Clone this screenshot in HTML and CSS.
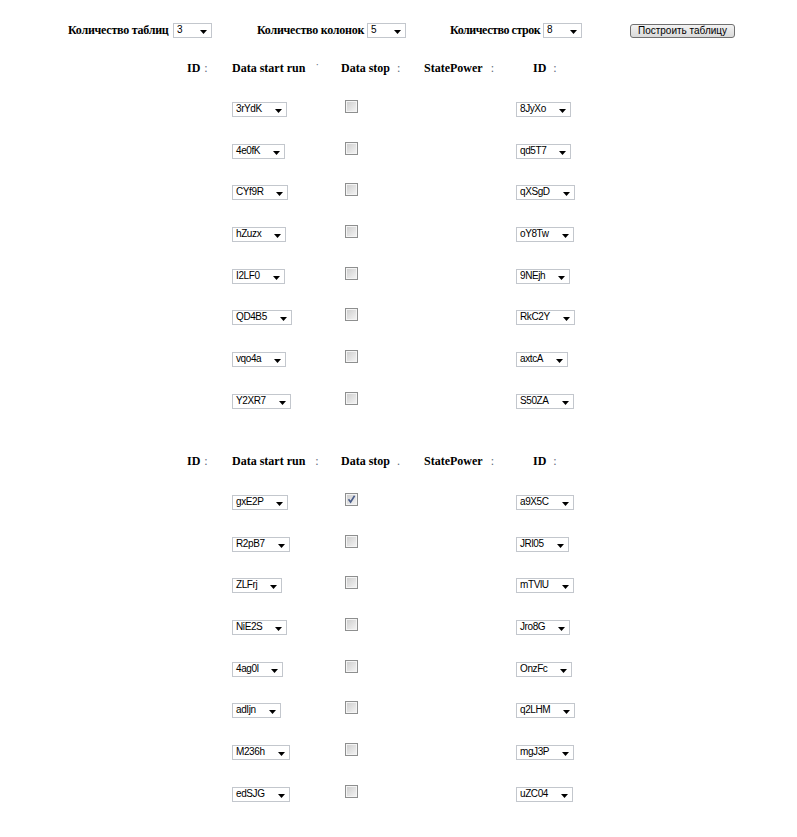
FILE: index.html
```html
<!DOCTYPE html>
<html>
<head>
<meta charset="utf-8">
<link rel="stylesheet" href="styles.css">
</head>
<body>
<div class="bar">
  <div class="grp g1"><span class="lbl">Количество таблиц</span><div class="sel small"><span>3</span><svg class="arr" width="7" height="4"><path d="M0 0h7L3.5 4z"/></svg></div></div>
  <div class="grp g2"><span class="lbl">Количество колонок</span><div class="sel small"><span>5</span><svg class="arr" width="7" height="4"><path d="M0 0h7L3.5 4z"/></svg></div></div>
  <div class="grp g3"><span class="lbl">Количество строк</span><div class="sel small"><span>8</span><svg class="arr" width="7" height="4"><path d="M0 0h7L3.5 4z"/></svg></div></div>
  <button class="btn">Построить таблицу</button>
</div>

<div class="tbl">
  <div class="th c1">ID<span class="c m1">:</span></div>
  <div class="th c2">Data start run<span class="c m2">˙</span></div>
  <div class="th c3">Data stop<span class="c m3">:</span></div>
  <div class="th c4">StatePower<span class="c m4">:</span></div>
  <div class="th c5">ID<span class="c m5">:</span></div>

  <div></div><div class="td"><div class="sel"><span>3rYdK</span><svg class="arr" width="7" height="4"><path d="M0 0h7L3.5 4z"/></svg></div></div><div class="td c3"><span class="cb"></span></div><div></div><div class="td"><div class="sel"><span>8JyXo</span><svg class="arr" width="7" height="4"><path d="M0 0h7L3.5 4z"/></svg></div></div>
  <div></div><div class="td"><div class="sel"><span>4e0fK</span><svg class="arr" width="7" height="4"><path d="M0 0h7L3.5 4z"/></svg></div></div><div class="td c3"><span class="cb"></span></div><div></div><div class="td"><div class="sel"><span>qd5T7</span><svg class="arr" width="7" height="4"><path d="M0 0h7L3.5 4z"/></svg></div></div>
  <div></div><div class="td"><div class="sel"><span>CYf9R</span><svg class="arr" width="7" height="4"><path d="M0 0h7L3.5 4z"/></svg></div></div><div class="td c3"><span class="cb"></span></div><div></div><div class="td"><div class="sel"><span>qXSgD</span><svg class="arr" width="7" height="4"><path d="M0 0h7L3.5 4z"/></svg></div></div>
  <div></div><div class="td"><div class="sel"><span>hZuzx</span><svg class="arr" width="7" height="4"><path d="M0 0h7L3.5 4z"/></svg></div></div><div class="td c3"><span class="cb"></span></div><div></div><div class="td"><div class="sel"><span>oY8Tw</span><svg class="arr" width="7" height="4"><path d="M0 0h7L3.5 4z"/></svg></div></div>
  <div></div><div class="td"><div class="sel"><span>I2LF0</span><svg class="arr" width="7" height="4"><path d="M0 0h7L3.5 4z"/></svg></div></div><div class="td c3"><span class="cb"></span></div><div></div><div class="td"><div class="sel"><span>9NEjh</span><svg class="arr" width="7" height="4"><path d="M0 0h7L3.5 4z"/></svg></div></div>
  <div></div><div class="td"><div class="sel"><span>QD4B5</span><svg class="arr" width="7" height="4"><path d="M0 0h7L3.5 4z"/></svg></div></div><div class="td c3"><span class="cb"></span></div><div></div><div class="td"><div class="sel"><span>RkC2Y</span><svg class="arr" width="7" height="4"><path d="M0 0h7L3.5 4z"/></svg></div></div>
  <div></div><div class="td"><div class="sel"><span>vqo4a</span><svg class="arr" width="7" height="4"><path d="M0 0h7L3.5 4z"/></svg></div></div><div class="td c3"><span class="cb"></span></div><div></div><div class="td"><div class="sel"><span>axtcA</span><svg class="arr" width="7" height="4"><path d="M0 0h7L3.5 4z"/></svg></div></div>
  <div></div><div class="td"><div class="sel"><span>Y2XR7</span><svg class="arr" width="7" height="4"><path d="M0 0h7L3.5 4z"/></svg></div></div><div class="td c3"><span class="cb"></span></div><div></div><div class="td"><div class="sel"><span>S50ZA</span><svg class="arr" width="7" height="4"><path d="M0 0h7L3.5 4z"/></svg></div></div>
</div>

<div class="tbl">
  <div class="th c1">ID<span class="c m1">:</span></div>
  <div class="th c2">Data start run<span class="c m2">:</span></div>
  <div class="th c3">Data stop<span class="c m3">.</span></div>
  <div class="th c4">StatePower<span class="c m4">:</span></div>
  <div class="th c5">ID<span class="c m5">:</span></div>

  <div></div><div class="td"><div class="sel"><span>gxE2P</span><svg class="arr" width="7" height="4"><path d="M0 0h7L3.5 4z"/></svg></div></div><div class="td c3"><span class="cb checked"><svg width="11" height="11" viewBox="0 0 11 11"><path d="M2.5 5.2 L4.6 8 L8.6 1.8" fill="none" stroke="#4a5d8a" stroke-width="1.6"/></svg></span></div><div></div><div class="td"><div class="sel"><span>a9X5C</span><svg class="arr" width="7" height="4"><path d="M0 0h7L3.5 4z"/></svg></div></div>
  <div></div><div class="td"><div class="sel"><span>R2pB7</span><svg class="arr" width="7" height="4"><path d="M0 0h7L3.5 4z"/></svg></div></div><div class="td c3"><span class="cb"></span></div><div></div><div class="td"><div class="sel"><span>JRl05</span><svg class="arr" width="7" height="4"><path d="M0 0h7L3.5 4z"/></svg></div></div>
  <div></div><div class="td"><div class="sel"><span>ZLFrj</span><svg class="arr" width="7" height="4"><path d="M0 0h7L3.5 4z"/></svg></div></div><div class="td c3"><span class="cb"></span></div><div></div><div class="td"><div class="sel"><span>mTVlU</span><svg class="arr" width="7" height="4"><path d="M0 0h7L3.5 4z"/></svg></div></div>
  <div></div><div class="td"><div class="sel"><span>NiE2S</span><svg class="arr" width="7" height="4"><path d="M0 0h7L3.5 4z"/></svg></div></div><div class="td c3"><span class="cb"></span></div><div></div><div class="td"><div class="sel"><span>Jro8G</span><svg class="arr" width="7" height="4"><path d="M0 0h7L3.5 4z"/></svg></div></div>
  <div></div><div class="td"><div class="sel"><span>4ag0l</span><svg class="arr" width="7" height="4"><path d="M0 0h7L3.5 4z"/></svg></div></div><div class="td c3"><span class="cb"></span></div><div></div><div class="td"><div class="sel"><span>OnzFc</span><svg class="arr" width="7" height="4"><path d="M0 0h7L3.5 4z"/></svg></div></div>
  <div></div><div class="td"><div class="sel"><span>adIjn</span><svg class="arr" width="7" height="4"><path d="M0 0h7L3.5 4z"/></svg></div></div><div class="td c3"><span class="cb"></span></div><div></div><div class="td"><div class="sel"><span>q2LHM</span><svg class="arr" width="7" height="4"><path d="M0 0h7L3.5 4z"/></svg></div></div>
  <div></div><div class="td"><div class="sel"><span>M236h</span><svg class="arr" width="7" height="4"><path d="M0 0h7L3.5 4z"/></svg></div></div><div class="td c3"><span class="cb"></span></div><div></div><div class="td"><div class="sel"><span>mgJ3P</span><svg class="arr" width="7" height="4"><path d="M0 0h7L3.5 4z"/></svg></div></div>
  <div></div><div class="td"><div class="sel"><span>edSJG</span><svg class="arr" width="7" height="4"><path d="M0 0h7L3.5 4z"/></svg></div></div><div class="td c3"><span class="cb"></span></div><div></div><div class="td"><div class="sel"><span>uZC04</span><svg class="arr" width="7" height="4"><path d="M0 0h7L3.5 4z"/></svg></div></div>
</div>
</body>
</html>
```

FILE: styles.css
```css
html, body {
  background: #ffffff;
}
body {
  margin: 8px;
  font-family: "Liberation Serif", "Times New Roman", serif;
  font-size: 12px;
  color: #000;
}

.bar {
  display: flex;
  align-items: flex-start;
  padding-top: 15px;
  padding-left: 60px;
  height: 15px;
  margin-bottom: 23.45px;
}
.grp {
  display: flex;
  align-items: flex-start;
}
.g1 { width: 189px; }
.g2 { width: 193px; }
.g3 { width: 181px; }
.lbl {
  font-weight: bold;
  line-height: 15px;
  white-space: nowrap;
  letter-spacing: -0.25px;
  flex: none;
}
.g1 .lbl { width: 105px; }
.g2 .lbl { width: 110px; }
.g3 .lbl { width: 93px; letter-spacing: -0.45px; }

.sel {
  display: inline-flex;
  align-items: flex-start;
  box-sizing: border-box;
  height: 15px;
  border: 1px solid #c3c7cd;
  background: #fff;
  padding: 0 4px 0 3px;
  font-family: "Liberation Sans", Arial, sans-serif;
  font-size: 10px;
  letter-spacing: -0.4px;
  line-height: 12px;
  color: #000;
  white-space: nowrap;
}
.sel .arr {
  display: block;
  margin-top: 6px;
  margin-left: 13px;
  flex: none;
}
.sel.small {
  width: 39px;
  padding-right: 4px;
}
.sel.small .arr {
  margin-left: auto;
}

.btn {
  margin-top: 1px;
  margin-left: -1px;
  box-sizing: border-box;
  width: 105px;
  height: 14px;
  padding: 0;
  border: 1px solid #707070;
  border-radius: 3px;
  background: linear-gradient(#f3f3f3, #e6e6e6 50%, #dadada);
  font-family: "Liberation Sans", Arial, sans-serif;
  font-size: 10px;
  line-height: 12px;
  color: #000;
}

.tbl {
  display: grid;
  grid-template-columns: 45px 109px 83px 92px 80px;
  grid-template-rows: 38.55px repeat(8, 41.7px);
  margin-left: 179px;
  margin-bottom: 20.85px;
}
.th {
  font-weight: bold;
  line-height: 15px;
  white-space: nowrap;
}
.th.c5 { padding-left: 17px; }
.c {
  font-weight: normal;
  color: #5d6b7a;
}
.m1 { margin-left: 4px; }
.m2 { margin-left: 10px; }
.m3 { margin-left: 7px; }
.m4 { margin-left: 8px; }
.m5 { margin-left: 7px; }

.td {
  padding-top: 1px;
}
.td.c3 {
  padding-top: 0;
  padding-left: 4px;
}
.cb {
  display: block;
  box-sizing: border-box;
  width: 13px;
  height: 13px;
  border: 1px solid #8e8f8f;
  box-shadow: inset 0 0 0 1px #f4f4f4;
  background: linear-gradient(135deg, #cbcbcb, #f6f6f6);
}
.cb svg {
  display: block;
}
```
